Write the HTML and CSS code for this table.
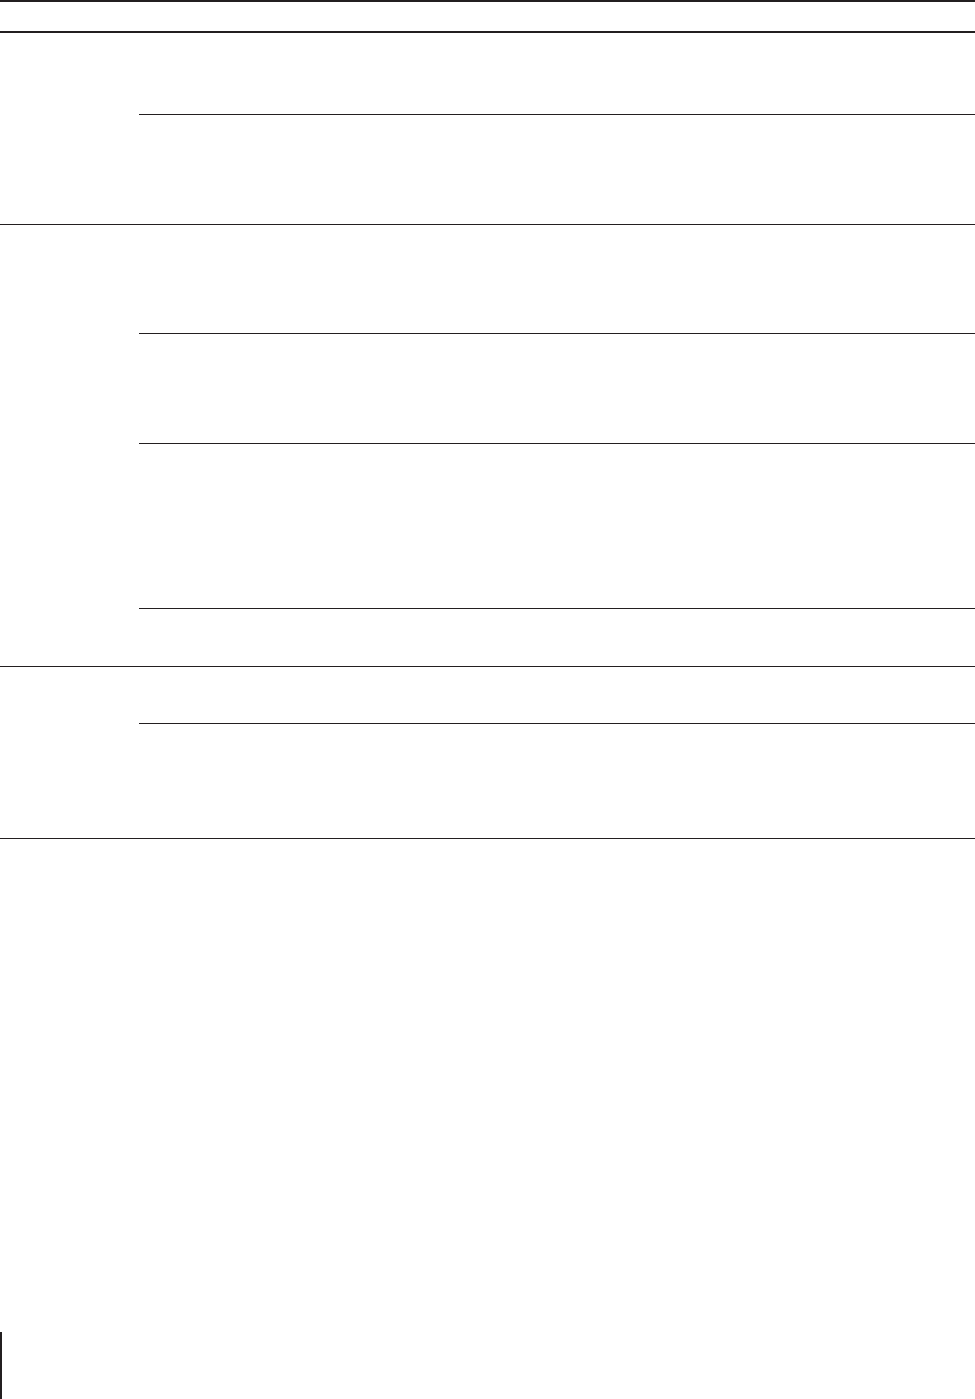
FILE: index.html
```html
<!DOCTYPE html>
<html lang="en">
<head>
  <meta charset="UTF-8" />
  <meta name="viewport" content="width=device-width, initial-scale=1.0" />
  <title>Table</title>
  <link rel="stylesheet" href="styles.css">
</head>
<body>
  <div class="sheet">
    <div class="head"></div>

    <div class="group">
      <div class="label"></div>
      <div class="rows">
        <div class="row r81"></div>
        <div class="row r109"></div>
      </div>
    </div>

    <div class="group">
      <div class="label"></div>
      <div class="rows">
        <div class="row r108"></div>
        <div class="row r109"></div>
        <div class="row r164"></div>
        <div class="row r57"></div>
      </div>
    </div>

    <div class="group">
      <div class="label"></div>
      <div class="rows">
        <div class="row r56"></div>
        <div class="row r114"></div>
      </div>
    </div>
  </div>

  <div class="margin-mark"></div>
</body>
</html>
```

FILE: styles.css
```css
html, body {
  margin: 0;
  padding: 0;
}

body {
  background: #fff;
  font-family: 'Liberation Sans', Arial, sans-serif;
  color: #231f20;
}

.sheet {
  border-top: 2px solid #231f20;
}

.head {
  height: 29px;
  border-bottom: 2px solid #231f20;
}

.group {
  display: flex;
  border-bottom: 1px solid #231f20;
}

.label {
  width: 139px;
  flex-shrink: 0;
}

.rows {
  flex: 1;
  display: flex;
  flex-direction: column;
}

.row {
  border-bottom: 1px solid #231f20;
}

.row:last-child {
  border-bottom: none;
}

.r56 { height: 56px; }
.r57 { height: 57px; }
.r81 { height: 81px; }
.r108 { height: 108px; }
.r109 { height: 109px; }
.r114 { height: 114px; }
.r164 { height: 164px; }

.margin-mark {
  width: 2px;
  height: 67px;
  margin-top: 493px;
  background: #231f20;
}
```
